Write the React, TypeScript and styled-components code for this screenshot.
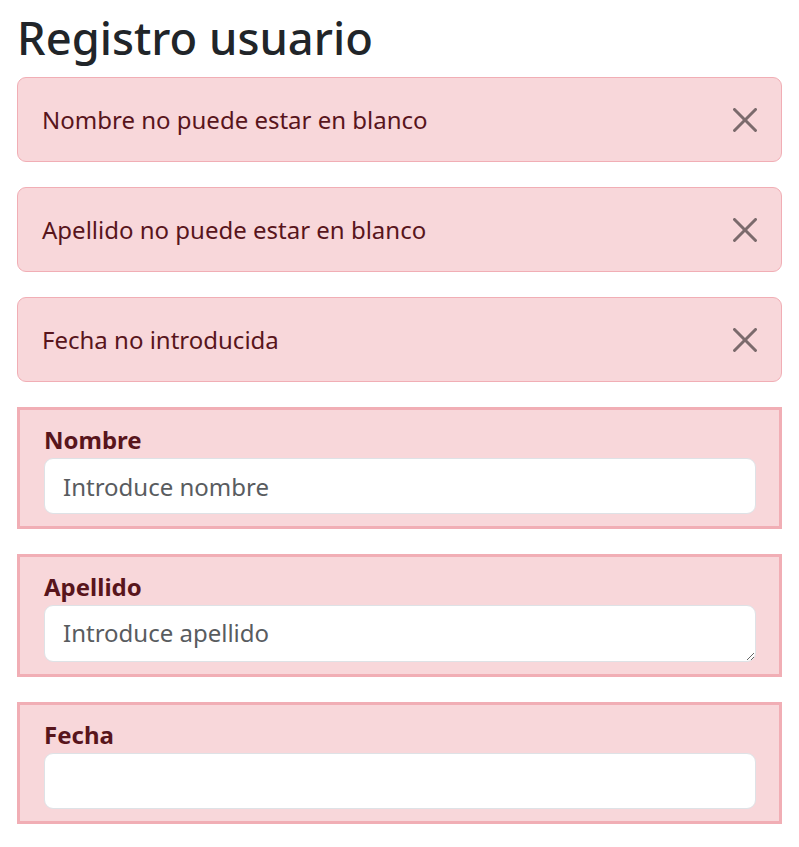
import React from "react";
import styled, { createGlobalStyle } from "styled-components";

const GlobalStyle = createGlobalStyle`
  * { box-sizing: border-box; }
  body {
    margin: 0;
    background: #fff;
    color: #212529;
    font-family: "Noto Sans", "Open Sans", sans-serif;
    font-size: 24px;
    line-height: 1.5;
  }
`;

const Page = styled.div`
  padding: 11px 17px 24px;
  display: flex;
  flex-direction: column;
  gap: 25px;
`;

const Title = styled.h1`
  margin: 0 0 -13px;
  font-size: 45.3px;
  font-weight: 500;
  line-height: 1.2;
  color: #212529;
`;

const Alert = styled.div`
  display: flex;
  align-items: center;
  justify-content: space-between;
  padding: 23.5px 24px;
  border: 1px solid #f1aeb5;
  border-radius: 9px;
  background: #f8d7da;
  color: #58151c;
`;

const CloseButton = styled.button`
  width: 24px;
  height: 24px;
  padding: 0;
  border: none;
  background: transparent;
  opacity: 0.5;
  cursor: pointer;
  display: flex;
  svg { width: 24px; height: 24px; }
`;

const FieldBox = styled.div`
  display: flex;
  flex-direction: column;
  padding: 12px 23px 12px 24px;
  border: 3px solid #f1aeb5;
  background: #f8d7da;
`;

const Label = styled.label`
  font-weight: 700;
  color: #58151c;
  line-height: 36px;
`;

const controlCss = `
  display: block;
  width: 100%;
  padding: 9px 18px;
  font-family: "Noto Sans", "Open Sans", sans-serif;
  font-size: 24px;
  line-height: 1.5;
  color: #212529;
  background: #fff;
  border: 1px solid #dee2e6;
  border-radius: 9px;
  outline: none;
  &::placeholder { color: #595c5f; }
`;

const Input = styled.input`
  ${controlCss}
  height: 56px;
`;

const TextArea = styled.textarea`
  ${controlCss}
  height: 57px;
  min-height: 57px;
  resize: vertical;
`;

const errors = [
  "Nombre no puede estar en blanco",
  "Apellido no puede estar en blanco",
  "Fecha no introducida",
];

function CloseIcon() {
  return (
    <svg viewBox="0 0 16 16" fill="#000">
      <path d="M.293.293a1 1 0 0 1 1.414 0L8 6.586 14.293.293a1 1 0 1 1 1.414 1.414L9.414 8l6.293 6.293a1 1 0 0 1-1.414 1.414L8 9.414l-6.293 6.293a1 1 0 0 1-1.414-1.414L6.586 8 .293 1.707a1 1 0 0 1 0-1.414" />
    </svg>
  );
}

function App() {
  return (
    <>
      <GlobalStyle />
      <Page>
        <Title>Registro usuario</Title>
        {errors.map((msg) => (
          <Alert key={msg}>
            <span>{msg}</span>
            <CloseButton aria-label="Cerrar">
              <CloseIcon />
            </CloseButton>
          </Alert>
        ))}
        <FieldBox>
          <Label htmlFor="nombre">Nombre</Label>
          <Input id="nombre" placeholder="Introduce nombre" />
        </FieldBox>
        <FieldBox>
          <Label htmlFor="apellido">Apellido</Label>
          <TextArea id="apellido" rows={1} placeholder="Introduce apellido" />
        </FieldBox>
        <FieldBox>
          <Label htmlFor="fecha">Fecha</Label>
          <Input id="fecha" />
        </FieldBox>
      </Page>
    </>
  );
}

export default App;
